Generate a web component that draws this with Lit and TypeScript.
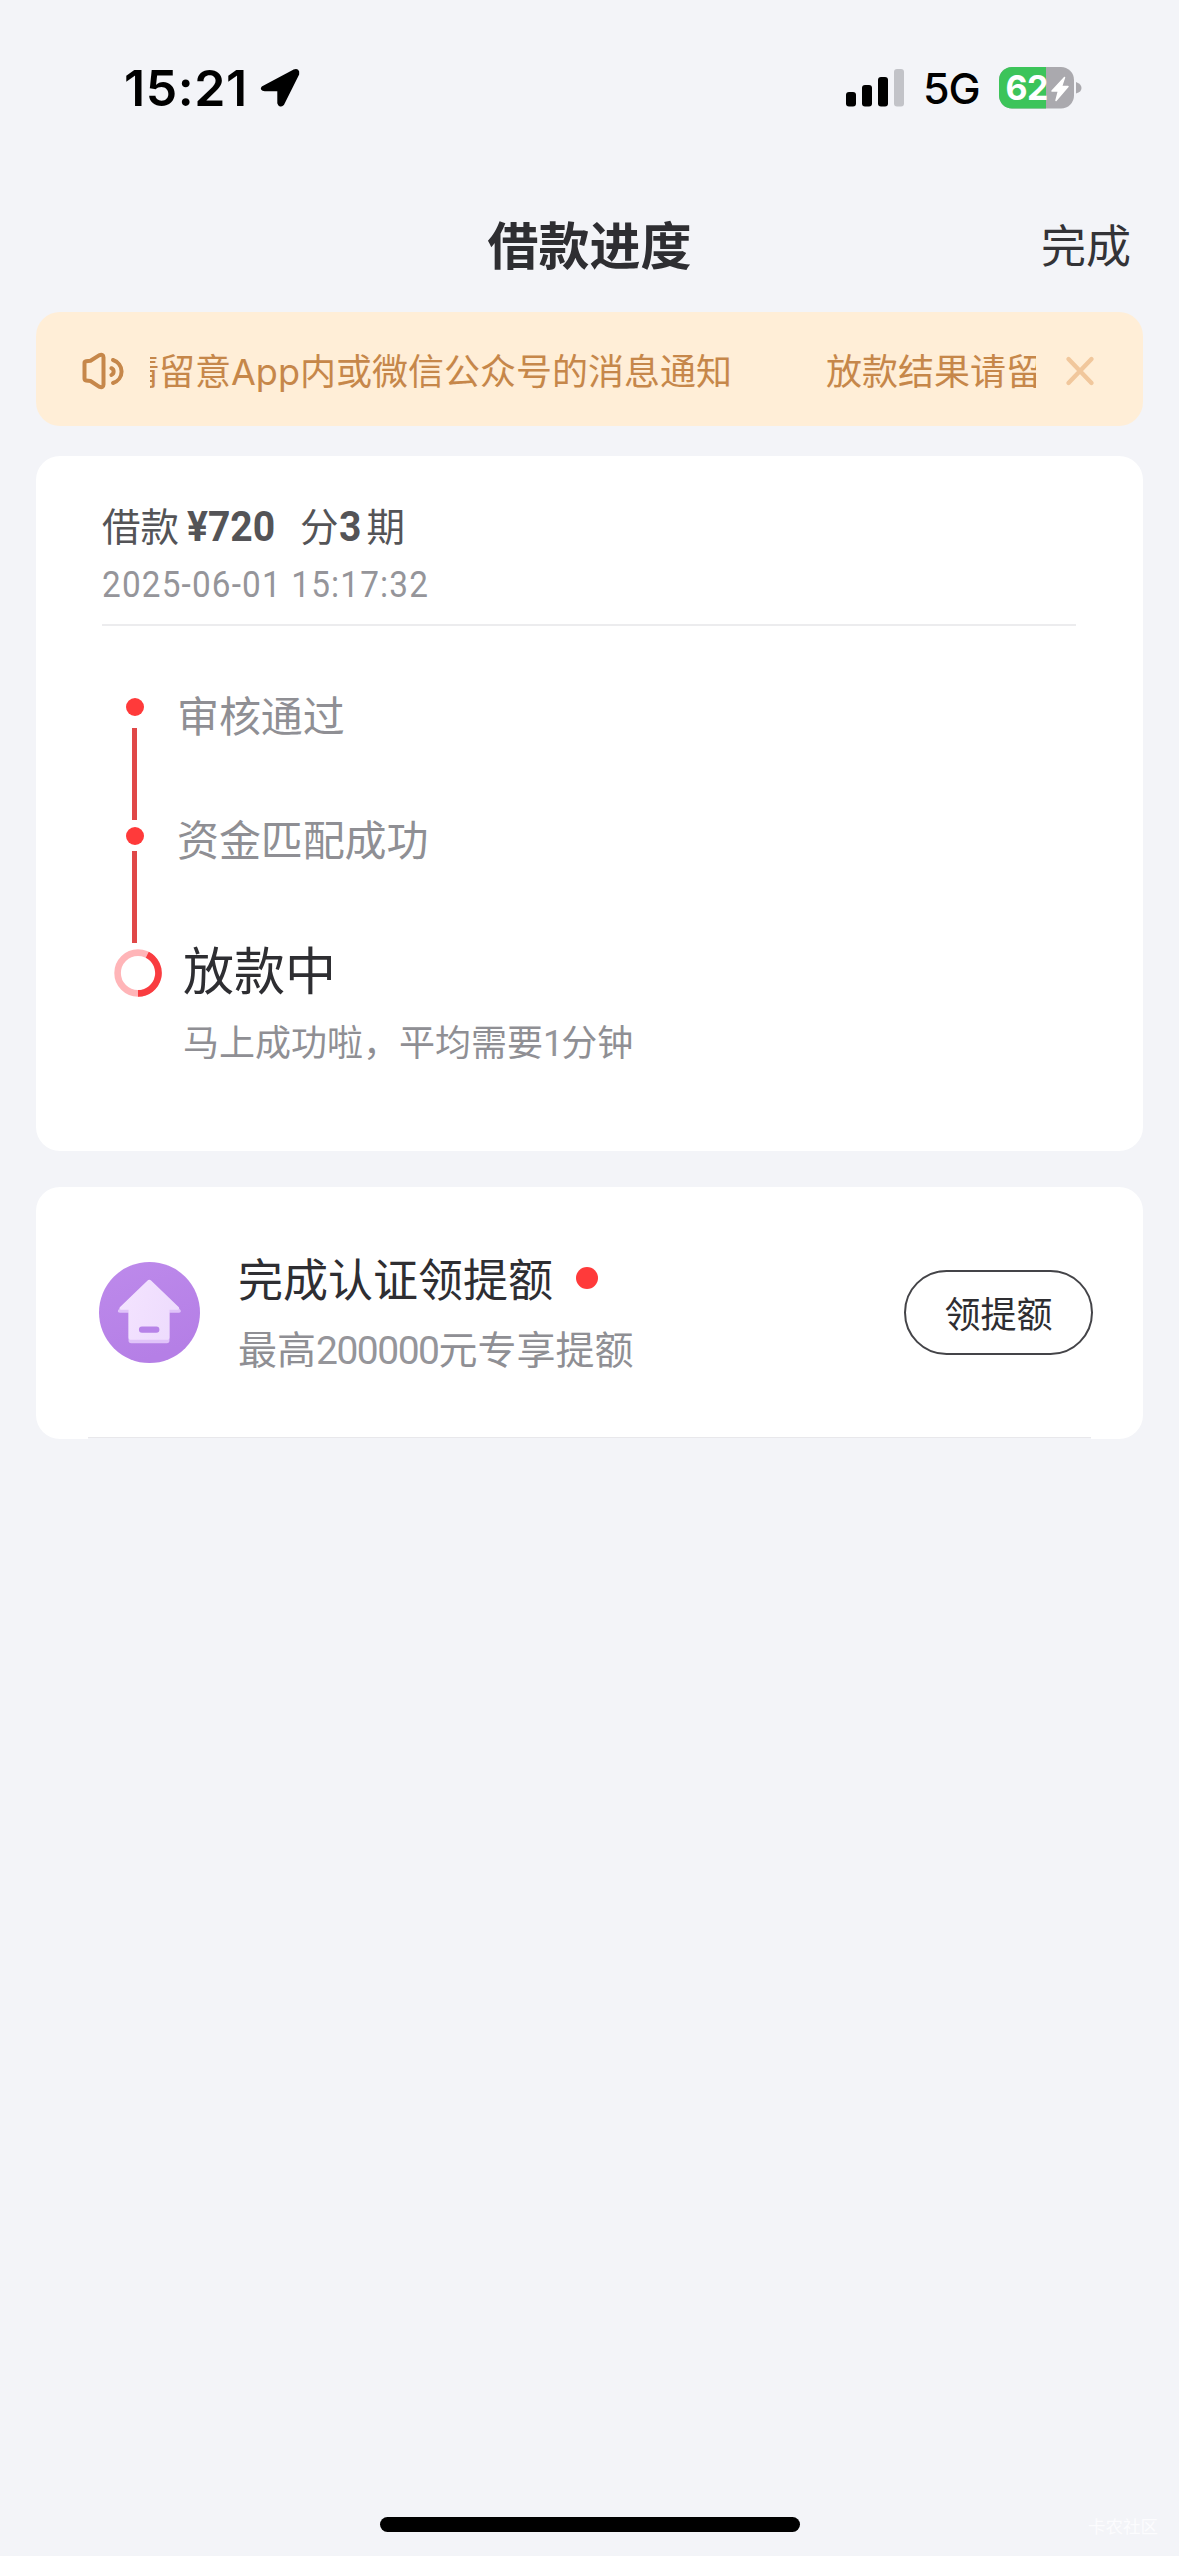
import { LitElement, html, css, svg } from "lit";
import { customElement, property } from "lit/decorators.js";

const NOTICE = { before: "放款结果请留意", latin: "App", after: "内或微信公众号的消息通知" };

@customElement("status-bar")
export class StatusBar extends LitElement {
  static styles = css`
    :host {
      display: flex;
      align-items: center;
      justify-content: space-between;
      height: 176px;
      padding: 0 97px 0 124px;
      box-sizing: border-box;
      font-family: Inter, "Liberation Sans", sans-serif;
      color: #000;
    }
    .left,
    .right {
      display: flex;
      align-items: center;
    }
    .time {
      font-size: 50px;
      font-weight: 600;
      line-height: 60px;
      width: 125px;
      letter-spacing: 0.6px;
      white-space: nowrap;
    }
    .arrow {
      margin-left: 11px;
    }
    .network {
      font-size: 43px;
      font-weight: 450;
      line-height: 52px;
      width: 54px;
      margin: 0 22px 0 17px;
      letter-spacing: -1.2px;
    }
    svg {
      display: block;
    }
    .level {
      font: 700 34px Inter, "Liberation Sans", sans-serif;
      fill: #fff;
    }
  `;

  render() {
    return html`
      <div class="left">
        <span class="time">15:21</span>
        <svg class="arrow" width="41" height="41" viewBox="0 0 41 41">
          <path
            d="M3.5 19.5 L34 3.2 Q38.3 1.5 37.5 6 L22.5 36 Q20 38 19 35 V21.5 H5 Q1 21 3.5 19.5Z"
            fill="#000"
            stroke="#000"
            stroke-width="3.4"
            stroke-linejoin="round"
          />
        </svg>
      </div>
      <div class="right">
        <svg width="60" height="38" viewBox="0 0 60 38">
          <rect x="0" y="23" width="10" height="14.5" rx="3" />
          <rect x="16" y="16" width="10" height="21.5" rx="3" />
          <rect x="32" y="8" width="10" height="29.5" rx="3" />
          <rect x="48" y="0" width="10" height="37.5" rx="3" fill="#c2c3c8" />
        </svg>
        <span class="network">5G</span>
        <svg width="83" height="42" viewBox="0 0 83 42">
          <clipPath id="cell"><rect x="0" y="0" width="75" height="41.5" rx="13" /></clipPath>
          <g clip-path="url(#cell)">
            <rect width="75" height="42" fill="#aaa9ae" />
            <rect width="47" height="42" fill="#3cc45a" />
          </g>
          <path d="M77 15 Q82.5 17 82.5 21 T77 26.5Z" fill="#aaa9ae" />
          <text class="level" x="6.5" y="33" textLength="43">62</text>
          <path
            d="M65.5 10.5 L53 24 H59.5 L57 33.5 L69 19.5 H62.5Z"
            fill="#fff"
            stroke="#fff"
            stroke-width="1.5"
            stroke-linejoin="round"
          />
        </svg>
      </div>
    `;
  }
}

@customElement("notice-bar")
export class NoticeBar extends LitElement {
  static styles = css`
    :host {
      display: flex;
      align-items: center;
      height: 114px;
      padding: 0 47px 0 45px;
      box-sizing: border-box;
      border-radius: 24px;
      background: #ffeed7;
      color: #c6874a;
    }
    svg {
      display: block;
      flex: none;
      margin-top: 4px;
    }
    .viewport {
      display: flex;
      gap: 94px;
      width: 886px;
      margin: 0 28px 0 24px;
      overflow: hidden;
      font-size: 36px;
      line-height: 54px;
      white-space: nowrap;
    }
    .message {
      flex: none;
    }
    .message:first-child {
      margin-left: -171px;
    }
    .latin {
      font-family: Inter, "Liberation Sans", sans-serif;
      line-height: 1;
    }
  `;

  private message() {
    return html`<span class="message"
      >${NOTICE.before}<span class="latin">${NOTICE.latin}</span>${NOTICE.after}</span
    >`;
  }

  render() {
    return html`
      <svg width="45" height="40" viewBox="0 0 45 40" fill="none" stroke="#c6874a" stroke-width="4" stroke-linejoin="round" stroke-linecap="round">
        <path d="M3.5 12 Q3.5 10.5 5 10.3 L9.5 9.8 L18 4.4 Q22.5 2.6 22.5 6.5 V33.5 Q22.5 37.5 18 35.6 L9.5 30 L5 29.5 Q3.5 29.3 3.5 27.5Z" />
        <path d="M32 9 A12 12 0 0 1 32 32" />
        <path d="M30.4 17.2 A3.7 3.7 0 0 1 30.4 24" />
      </svg>
      <div class="viewport">${this.message()}${this.message()}</div>
      <svg width="32" height="32" viewBox="0 0 32 32" stroke="#f1c79c" stroke-width="4.4" stroke-linecap="round">
        <path d="M4.5 4 L27.5 28 M27.5 4 L4.5 28" />
      </svg>
    `;
  }
}

@customElement("progress-step")
export class ProgressStep extends LitElement {
  @property() label = "";

  static styles = css`
    :host {
      display: flex;
      color: #8f8f94;
    }
    .rail {
      display: flex;
      flex-direction: column;
      align-items: center;
      width: 19px;
      margin-right: 33px;
    }
    .dot {
      width: 18px;
      height: 18px;
      border-radius: 50%;
      background: #ff3a3a;
    }
    .line {
      width: 5px;
      height: 92px;
      margin-top: var(--line-gap, 12px);
      background: #e04848;
    }
    .label {
      font-size: 42px;
      line-height: 60px;
      margin-top: var(--label-shift, -14px);
      letter-spacing: -0.1px;
    }
  `;

  render() {
    return html`
      <div class="rail"><i class="dot"></i><i class="line"></i></div>
      <div class="label">${this.label}</div>
    `;
  }
}

@customElement("app-root")
export class AppRoot extends LitElement {
  static styles = css`
    :host {
      display: flex;
      flex-direction: column;
      position: relative;
      width: 1179px;
      height: 2556px;
      box-sizing: border-box;
      overflow: hidden;
      background: #f3f4f8;
      font-family: "Noto Sans CJK SC", "Noto Sans", sans-serif;
      font-weight: 400;
      color: #2e2e32;
    }
    svg {
      display: block;
    }
    .nav {
      display: grid;
      grid-template-columns: 1fr auto 1fr;
      align-items: center;
      height: 136px;
      padding: 0 48px;
    }
    .title {
      grid-column: 2;
      margin-bottom: 3px;
      font-size: 51px;
      line-height: 70px;
      font-weight: 700;
    }
    .done {
      justify-self: end;
      margin-bottom: 1px;
      font-size: 45px;
      line-height: 66px;
      color: #333337;
    }
    .content {
      display: flex;
      flex-direction: column;
      margin: 0 36px;
    }
    .card {
      background: #fff;
      border-radius: 24px;
      box-sizing: border-box;
    }
    .loan {
      height: 694.5px;
      margin-top: 30px;
      padding: 39px 67px 0 66px;
    }
    .summary {
      display: flex;
      align-items: baseline;
      font-size: 38.5px;
      line-height: 58px;
      color: #545457;
    }
    .figure {
      display: inline-block;
      font-family: Roboto, "Liberation Sans", sans-serif;
      font-size: 42px;
      font-weight: 700;
      line-height: 1;
      letter-spacing: 0;
      transform: scaleX(0.93);
      transform-origin: left;
    }
    .amount {
      width: 89px;
      margin: 0 24px 0 8px;
    }
    .terms {
      width: 28px;
    }
    .date {
      display: block;
      width: max-content;
      font-family: Roboto, "Liberation Sans", sans-serif;
      font-size: 37px;
      font-weight: 400;
      line-height: 52px;
      letter-spacing: 1.3px;
      color: #95959a;
      white-space: pre;
      margin-top: 6px;
      transform: scaleX(0.9);
      transform-origin: left;
    }
    .rule {
      height: 2px;
      margin-top: 13px;
      background: #ececee;
    }
    .steps {
      display: flex;
      flex-direction: column;
      padding: 71.5px 0 0 23px;
    }
    .second {
      --line-gap: 6px;
      --label-shift: -19px;
      margin-top: 7px;
    }
    .current {
      display: flex;
      margin: 6px 0 0 -11px;
    }
    .stage {
      font-size: 51px;
      line-height: 70px;
      margin: -15.5px 0 0 21px;
    }
    .hint {
      font-size: 36px;
      line-height: 54px;
      margin: 10px 0 0 21px;
      color: #8f8f94;
    }
    .thin {
      font-family: Roboto, "Liberation Sans", sans-serif;
      font-weight: 400;
      line-height: 1;
      letter-spacing: -2px;
      color: #95959a;
    }
    .promo {
      display: flex;
      flex-direction: column;
      height: 252px;
      margin-top: 36px;
    }
    .promo-body {
      display: flex;
      align-items: center;
      flex: 1;
      padding: 2px 50px 0 63px;
    }
    .promo-text {
      flex: 1;
      margin: 0 0 5px 38px;
    }
    .promo-title {
      display: flex;
      align-items: center;
      font-size: 45px;
      line-height: 66px;
    }
    .badge {
      width: 22px;
      height: 22px;
      margin-left: 23px;
      border-radius: 50%;
      background: #ff3a3a;
    }
    .promo-sub {
      font-size: 39px;
      line-height: 58px;
      margin-top: 7px;
      color: #8f8f94;
      white-space: nowrap;
    }
    .digits {
      letter-spacing: -1.5px;
    }
    .claim {
      display: flex;
      align-items: center;
      justify-content: center;
      width: 189px;
      height: 85px;
      padding-bottom: 2px;
      box-sizing: border-box;
      border: 2px solid #444448;
      border-radius: 43px;
      font-size: 36px;
      line-height: 54px;
    }
    .edge {
      height: 1px;
      margin: 0 52px;
      border-top: 1px solid #e8e8eb;
      background: #f3f4f8;
    }
    .home {
      position: absolute;
      left: 380px;
      bottom: 24px;
      width: 420px;
      height: 15px;
      border-radius: 8px;
      background: #000;
    }
    .mark {
      position: absolute;
      right: 21px;
      bottom: 17px;
      font-size: 17.5px;
      line-height: 26px;
      color: #fcfcfe;
    }
  `;

  private house() {
    return svg`
      <defs>
        <linearGradient id="disc" x1="0" y1="0" x2="0.4" y2="1">
          <stop offset="0" stop-color="#bd8aeb" />
          <stop offset="1" stop-color="#b57fe6" />
        </linearGradient>
        <linearGradient id="wall" x1="0" y1="0" x2="1" y2="0.3">
          <stop offset="0" stop-color="#f4e4ff" />
          <stop offset="1" stop-color="#eedcfd" />
        </linearGradient>
      </defs>
      <circle cx="177.5" cy="187.5" r="150.5" fill="url(#disc)" />
      <path d="M171 97 Q177 91 183 97 L270 180 Q273 188 265 188 H237 V271 Q237 279 229 279 H123 Q115 279 115 271 V188 H90 Q81 188 84 180Z" fill="#e0c3f9" />
      <path d="M171 93 Q177 87 183 93 L265 172 Q268 178 262 179 H237 V262 Q237 269 229 269 H123 Q115 269 115 262 V179 H92 Q86 178 89 172Z" fill="url(#wall)" />
      <rect x="146" y="229" width="61" height="19" rx="9" fill="#b783e8" />
    `;
  }

  render() {
    return html`
      <status-bar></status-bar>
      <header class="nav">
        <span class="title">借款进度</span>
        <span class="done">完成</span>
      </header>
      <main class="content">
        <notice-bar></notice-bar>
        <section class="card loan">
          <div class="summary">
            <span>借款</span><span class="figure amount">¥720</span><span>分</span
            ><span class="figure terms">3</span><span>期</span>
          </div>
          <span class="date">2025-06-01 15:17:32</span>
          <div class="rule"></div>
          <div class="steps">
            <progress-step label="审核通过"></progress-step>
            <progress-step class="second" label="资金匹配成功"></progress-step>
            <div class="current">
              <svg width="48" height="48" viewBox="0 0 48 48" fill="none" stroke-width="6.6">
                <circle cx="24" cy="24" r="20.4" stroke="#ffb5b8" />
                <path d="M33.3 5.8 A20.4 20.4 0 0 1 24 44.4" stroke="#f93c40" />
              </svg>
              <div>
                <div class="stage">放款中</div>
                <div class="hint">马上成功啦，平均需要<span class="thin">1</span>分钟</div>
              </div>
            </div>
          </div>
        </section>
        <section class="card promo">
          <div class="promo-body">
            <svg width="101" height="101" viewBox="27 37 301 301">${this.house()}</svg>
            <div class="promo-text">
              <div class="promo-title">完成认证领提额<i class="badge"></i></div>
              <div class="promo-sub">最高<span class="thin digits">200000</span>元专享提额</div>
            </div>
            <div class="claim">领提额</div>
          </div>
          <div class="edge"></div>
        </section>
      </main>
      <div class="home"></div>
      <div class="mark">卡农社区</div>
    `;
  }
}
